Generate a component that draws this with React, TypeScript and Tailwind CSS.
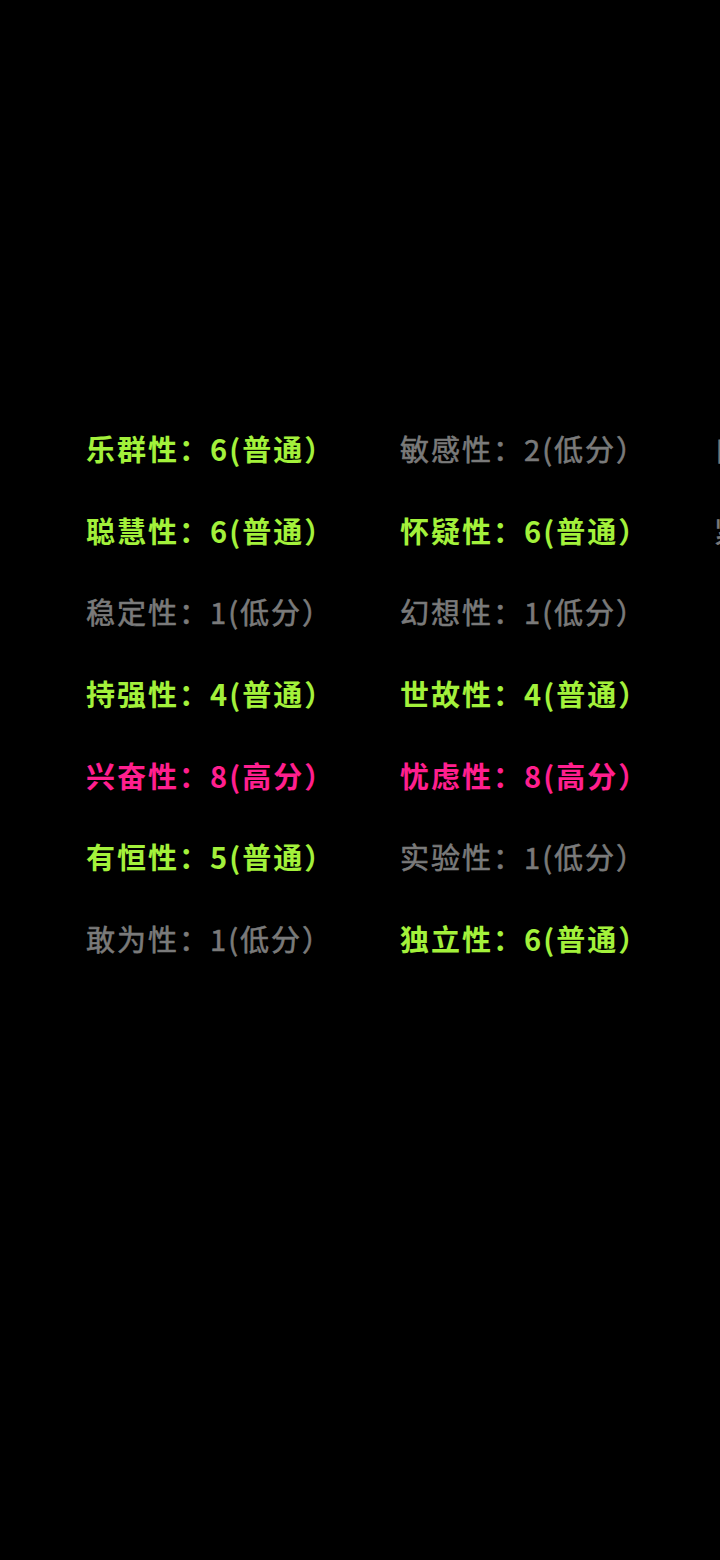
const items: { name: string; score: number; level: string }[] = [
  { name: "乐群性", score: 6, level: "普通" },
  { name: "聪慧性", score: 6, level: "普通" },
  { name: "稳定性", score: 1, level: "低分" },
  { name: "持强性", score: 4, level: "普通" },
  { name: "兴奋性", score: 8, level: "高分" },
  { name: "有恒性", score: 5, level: "普通" },
  { name: "敢为性", score: 1, level: "低分" },
  { name: "敏感性", score: 2, level: "低分" },
  { name: "怀疑性", score: 6, level: "普通" },
  { name: "幻想性", score: 1, level: "低分" },
  { name: "世故性", score: 4, level: "普通" },
  { name: "忧虑性", score: 8, level: "高分" },
  { name: "实验性", score: 1, level: "低分" },
  { name: "独立性", score: 6, level: "普通" },
  { name: "自律性", score: 2, level: "低分" },
  { name: "紧张性", score: 3, level: "低分" },
];

function Factor({ name, score, level }: { name: string; score: number; level: string }) {
  const tone =
    level === "高分"
      ? "text-[#ff1f8e] font-bold"
      : level === "普通"
        ? "text-[#a3f13b] font-bold"
        : "text-[#7a7a7a] font-normal [-webkit-text-stroke:0.6px_#7a7a7a]";
  return (
    <div className={`flex items-center whitespace-nowrap text-[29px] tracking-[2px] ${tone}`}>
      {name}：{score}({level}）
    </div>
  );
}

export default function App() {
  return (
    <div
      className="w-[720px] h-[1560px] bg-black overflow-hidden"
      style={{ fontFamily: '"Noto Sans CJK SC", "Noto Sans", sans-serif' }}
    >
      <div className="pt-[408px] pl-[86px] grid grid-flow-col grid-rows-[repeat(7,81.67px)] auto-cols-[314px]">
        {items.map((it) => (
          <Factor key={it.name} {...it} />
        ))}
      </div>
    </div>
  );
}
